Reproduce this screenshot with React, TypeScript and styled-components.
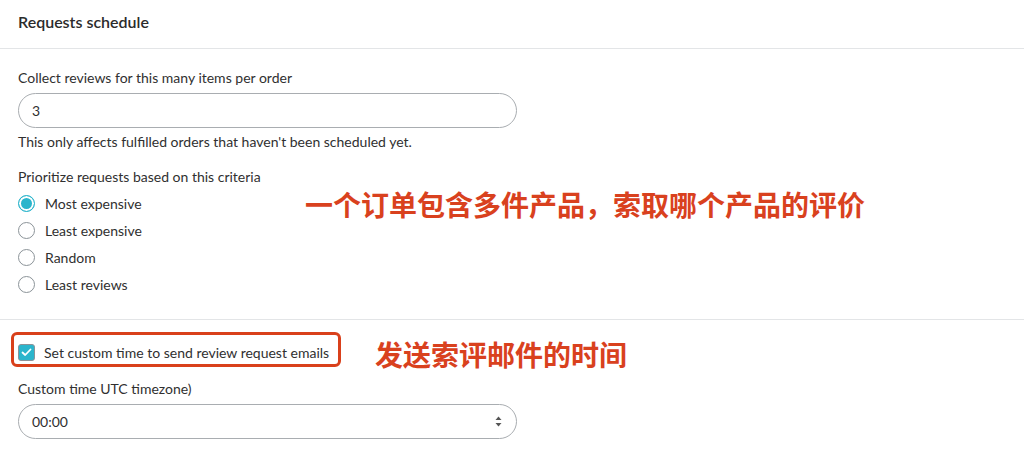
import React, { useState } from "react";
import styled, { createGlobalStyle } from "styled-components";

const GlobalStyle = createGlobalStyle`
  html, body {
    margin: 0;
    padding: 0;
    background: #ffffff;
  }
  body {
    font-family: Lato, "Noto Sans", "Liberation Sans", sans-serif;
    color: #303030;
  }
`;

const Page = styled.div`
  position: relative;
  width: 1024px;
  height: 456px;
  overflow: hidden;
  background: #fff;
`;

const Header = styled.div`
  height: 48px;
  display: flex;
  align-items: center;
  padding: 0 18px;
  border-bottom: 1px solid #e3e5e7;
  box-sizing: content-box;
`;

const Title = styled.h2`
  margin: 0 0 5px;
  font-size: 16px;
  font-weight: 600;
  color: #2b2b2b;
`;

const Section = styled.div<{ $top: number; $bottom: number; $divider?: boolean }>`
  padding: ${(p) => p.$top}px 18px ${(p) => p.$bottom}px;
  border-bottom: ${(p) => (p.$divider ? "1px solid #e3e5e7" : "none")};
`;

const Label = styled.div<{ $gap?: number }>`
  font-size: 14px;
  line-height: 16px;
  color: #303030;
  margin-bottom: ${(p) => p.$gap ?? 7}px;
`;

const Help = styled.div`
  font-size: 14px;
  line-height: 16px;
  color: #303030;
  margin-top: 6px;
`;

const Field = styled.div`
  width: 499px;
  height: 35px;
  box-sizing: border-box;
  border: 1px solid #a9adb1;
  border-radius: 18px;
  display: flex;
  align-items: center;
  justify-content: space-between;
  padding: 0 14px 0 13px;
  font-size: 14px;
  color: #303030;
`;

const RadioList = styled.div`
  display: flex;
  flex-direction: column;
  gap: 9px;
  margin-top: 1px;
`;

const RadioRow = styled.label`
  display: flex;
  align-items: center;
  gap: 10px;
  height: 18px;
  font-size: 14px;
  color: #303030;
  cursor: pointer;
`;

const RadioDot = styled.span<{ $on: boolean }>`
  width: 17px;
  height: 17px;
  box-sizing: border-box;
  border-radius: 50%;
  border: 1.5px solid ${(p) => (p.$on ? "#2bb5cc" : "#8b9398")};
  background: ${(p) => (p.$on ? "#2bb5cc" : "#fff")};
  box-shadow: ${(p) => (p.$on ? "inset 0 0 0 2px #fff" : "none")};
  flex-shrink: 0;
`;

const CheckRow = styled.label`
  display: inline-flex;
  align-items: center;
  gap: 9px;
  font-size: 14px;
  color: #303030;
  cursor: pointer;
`;

const CheckBox = styled.span`
  width: 17px;
  height: 17px;
  box-sizing: border-box;
  border-radius: 3px;
  background: #2bb5cc;
  border: 1.5px solid #8b9398;
  display: flex;
  align-items: center;
  justify-content: center;
`;

const Highlight = styled.div`
  position: absolute;
  left: 11px;
  top: 332px;
  width: 330px;
  height: 35px;
  box-sizing: border-box;
  border: 3px solid #d9401b;
  border-radius: 6px;
  pointer-events: none;
`;

const Note = styled.div<{ $left: number; $top: number }>`
  position: absolute;
  left: ${(p) => p.$left}px;
  top: ${(p) => p.$top}px;
  font-family: "Noto Sans CJK SC", sans-serif;
  font-weight: 700;
  font-size: 28px;
  line-height: 34px;
  color: #d9411e;
  white-space: nowrap;
`;

const options = ["Most expensive", "Least expensive", "Random", "Least reviews"];

export default function App() {
  const [choice, setChoice] = useState(0);
  return (
    <Page>
      <GlobalStyle />
      <Header>
        <Title>Requests schedule</Title>
      </Header>

      <Section $top={21} $bottom={26}>
        <Label>Collect reviews for this many items per order</Label>
        <Field>3</Field>
        <Help>This only affects fulfilled orders that haven't been scheduled yet.</Help>
        <Label style={{ marginTop: 19 }} $gap={9}>
          Prioritize requests based on this criteria
        </Label>
        <RadioList>
          {options.map((o, i) => (
            <RadioRow key={o} onClick={() => setChoice(i)}>
              <RadioDot $on={choice === i} />
              {o}
            </RadioRow>
          ))}
        </RadioList>
      </Section>
      <Section $top={0} $bottom={0} $divider />

      <Section $top={21} $bottom={0}>
        <CheckRow>
          <CheckBox>
            <svg width="11" height="9" viewBox="0 0 11 9">
              <path d="M1.5 4.5 L4.2 7 L9.5 1.5" fill="none" stroke="#fff" strokeWidth="1.8" strokeLinecap="round" strokeLinejoin="round" />
            </svg>
          </CheckBox>
          Set custom time to send review request emails
        </CheckRow>
        <Label style={{ marginTop: 20 }}>Custom time UTC timezone)</Label>
        <Field>
          00:00
          <svg width="7" height="11" viewBox="0 0 7 11">
            <path d="M3.5 0.5 L6.5 4 H0.5 Z" fill="#555" />
            <path d="M3.5 10.5 L6.5 7 H0.5 Z" fill="#555" />
          </svg>
        </Field>
      </Section>

      <Highlight />
      <Note $left={305} $top={187}>一个订单包含多件产品，索取哪个产品的评价</Note>
      <Note $left={375} $top={337}>发送索评邮件的时间</Note>
    </Page>
  );
}
